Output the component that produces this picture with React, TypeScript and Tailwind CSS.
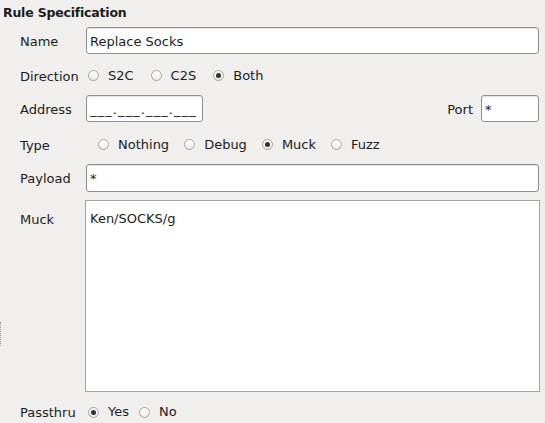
import React, { useState } from 'react';

const font = { fontFamily: '"DejaVu Sans", "Noto Sans", sans-serif' };

const Radio: React.FC<{ label: string; checked?: boolean; onClick?: () => void }> = ({ label, checked, onClick }) => (
  <button type="button" onClick={onClick} className="flex items-center gap-[9px]">
    <span className="w-[11px] h-[11px] rounded-full border border-[#a4a4a2] bg-gradient-to-b from-white to-[#ebeae8] flex items-center justify-center">
      {checked && <span className="w-[5px] h-[5px] rounded-full bg-[#2e3436]" />}
    </span>
    <span>{label}</span>
  </button>
);

const Label: React.FC<{ children: React.ReactNode }> = ({ children }) => (
  <div className="w-[86px] pl-[20px] pt-[2px] shrink-0">{children}</div>
);

const inputCls = 'h-[27px] rounded-[3px] border border-[#8e908f] bg-white px-[3px] pt-[1px] outline-none text-[13px] text-[#1c1c1c] shadow-[inset_0_1px_1px_rgba(0,0,0,0.12)]';

const App: React.FC = () => {
  const [direction, setDirection] = useState('both');
  const [type, setType] = useState('muck');
  const [passthru, setPassthru] = useState(true);
  const [name, setName] = useState('Replace Socks');
  const [address, setAddress] = useState('___.___.___.___');
  const [port, setPort] = useState('*');
  const [payload, setPayload] = useState('*');
  const [muck, setMuck] = useState('Ken/SOCKS/g');

  return (
    <div className="relative w-[545px] h-[423px] overflow-hidden bg-[#f0efed] text-[13px] text-[#1c1c1c]" style={font}>
      <div className="h-[27px] flex items-center pl-[3px] font-bold text-[12.5px] tracking-[-0.2px]">Rule Specification</div>

      <div className="h-[27px] flex items-center pr-[6px]">
        <Label>Name</Label>
        <input className={`${inputCls} flex-1`} value={name} onChange={e => setName(e.target.value)} style={font} />
      </div>

      <div className="h-[41px] flex items-center pt-[2px]">
        <Label>Direction</Label>
        <div className="flex items-center gap-[17px] ml-[2px]">
          <Radio label="S2C" checked={direction === 's2c'} onClick={() => setDirection('s2c')} />
          <Radio label="C2S" checked={direction === 'c2s'} onClick={() => setDirection('c2s')} />
          <Radio label="Both" checked={direction === 'both'} onClick={() => setDirection('both')} />
        </div>
      </div>

      <div className="h-[27px] flex items-center pr-[6px]">
        <Label>Address</Label>
        <input className={`${inputCls} w-[117px] tracking-[1.1px]`} value={address} onChange={e => setAddress(e.target.value)} style={font} />
        <div className="flex-1" />
        <span className="mr-[8px] pt-[2px]">Port</span>
        <input className={`${inputCls} w-[58px]`} value={port} onChange={e => setPort(e.target.value)} style={font} />
      </div>

      <div className="h-[42px] flex items-center pt-[3px]">
        <Label>Type</Label>
        <div className="flex items-center gap-[15px] ml-[12px]">
          <Radio label="Nothing" checked={type === 'nothing'} onClick={() => setType('nothing')} />
          <Radio label="Debug" checked={type === 'debug'} onClick={() => setType('debug')} />
          <Radio label="Muck" checked={type === 'muck'} onClick={() => setType('muck')} />
          <Radio label="Fuzz" checked={type === 'fuzz'} onClick={() => setType('fuzz')} />
        </div>
      </div>

      <div className="h-[28px] flex items-center pr-[6px]">
        <Label>Payload</Label>
        <input className={`${inputCls} flex-1 h-[28px]`} value={payload} onChange={e => setPayload(e.target.value)} style={font} />
      </div>

      <div className="flex mt-[8px] pr-[5px]">
        <div className="w-[85px] pl-[20px] pt-[10px] shrink-0">Muck</div>
        <textarea
          className="flex-1 h-[192px] border border-[#a3a3a1] bg-white px-[4px] pt-[8px] resize-none outline-none text-[13px] text-[#1c1c1c]"
          value={muck}
          onChange={e => setMuck(e.target.value)}
          style={font}
        />
      </div>

      <div className="h-[38px] flex items-center pt-[2px]">
        <Label>Passthru</Label>
        <div className="flex items-center gap-[10px] ml-[2px]">
          <Radio label="Yes" checked={passthru} onClick={() => setPassthru(true)} />
          <Radio label="No" checked={!passthru} onClick={() => setPassthru(false)} />
        </div>
      </div>

      <div className="absolute left-0 top-[322px] h-[24px] border-l border-dotted border-[#9a9a98]" />
    </div>
  );
};

export default App;
